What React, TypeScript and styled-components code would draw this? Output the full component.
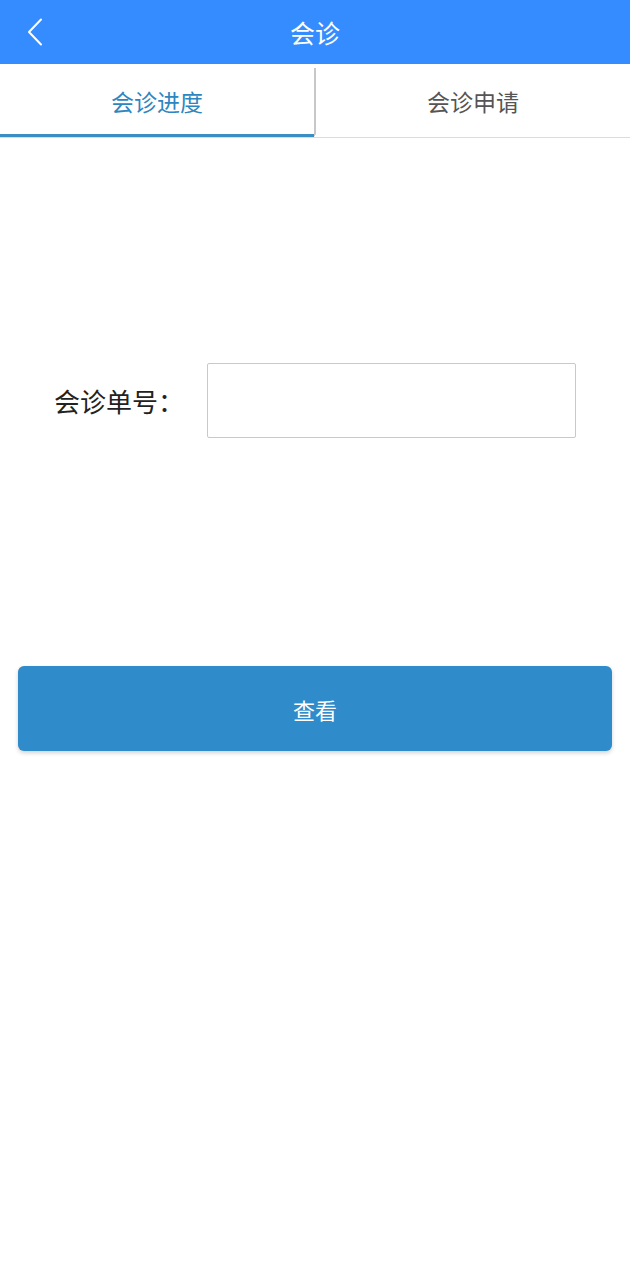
import React, { useState } from 'react';
import styled, { createGlobalStyle } from 'styled-components';

const GlobalStyle = createGlobalStyle`
  html, body {
    margin: 0;
    padding: 0;
    background: #fff;
  }
  body {
    font-family: "Noto Sans CJK SC", "Noto Sans", sans-serif;
  }
`;

const Page = styled.div`
  width: 630px;
  min-height: 1280px;
  display: flex;
  flex-direction: column;
  background: #fff;
`;

const NavBar = styled.header`
  height: 64px;
  background: #358cff;
  display: grid;
  grid-template-columns: 70px 1fr 70px;
  align-items: center;
`;

const BackButton = styled.button`
  width: 70px;
  height: 64px;
  border: 0;
  padding: 0 0 0 26px;
  background: transparent;
  display: flex;
  align-items: center;
`;

const NavTitle = styled.h1`
  margin: 0;
  text-align: center;
  color: #fff;
  font-size: 25px;
  font-weight: 400;
`;

const Tabs = styled.nav`
  display: flex;
  height: 74px;
  border-bottom: 1px solid #dcdcdc;
  box-sizing: border-box;
`;

const Tab = styled.button<{ $active: boolean }>`
  flex: 1;
  border: 0;
  background: #fff;
  font-family: inherit;
  font-size: 23px;
  color: ${({ $active }) => ($active ? '#2e86c1' : '#555')};
  border-bottom: 3px solid ${({ $active }) => ($active ? '#3a8ec4' : 'transparent')};
  padding: 0;
  padding-top: 3px;

  & + & {
    border-left: 2px solid #c8c8c8;
    margin-top: 4px;
    padding-top: 0;
  }
`;

const Form = styled.div`
  padding: 225px 54px 0 54px;
  display: flex;
  align-items: center;
`;

const Label = styled.label`
  font-size: 26px;
  color: #222;
  width: 153px;
  flex-shrink: 0;
`;

const Input = styled.input`
  width: 370px;
  height: 75px;
  box-sizing: border-box;
  border: 1px solid #c9c9c9;
  border-radius: 2px;
  font-size: 22px;
  padding: 0 12px;
  outline: none;
`;

const Actions = styled.div`
  padding: 228px 18px 0 18px;
`;

const PrimaryButton = styled.button`
  width: 100%;
  height: 85px;
  border: 0;
  border-radius: 6px;
  background: #2f8bc9;
  color: #fff;
  font-family: inherit;
  font-size: 22px;
  box-shadow: 0 2px 4px rgba(0, 0, 0, 0.18);
`;

const ChevronLeft = () => (
  <svg width="18" height="28" viewBox="0 0 18 28" fill="none">
    <path d="M15 1.5 L3 14 L15 26.5" stroke="#fff" strokeWidth="2" strokeLinecap="round" strokeLinejoin="round" />
  </svg>
);

export default function App() {
  const [tab, setTab] = useState(0);
  const [orderNo, setOrderNo] = useState('');

  return (
    <Page>
      <GlobalStyle />
      <NavBar>
        <BackButton aria-label="返回">
          <ChevronLeft />
        </BackButton>
        <NavTitle>会诊</NavTitle>
        <span />
      </NavBar>
      <Tabs>
        <Tab $active={tab === 0} onClick={() => setTab(0)}>
          会诊进度
        </Tab>
        <Tab $active={tab === 1} onClick={() => setTab(1)}>
          会诊申请
        </Tab>
      </Tabs>
      <Form>
        <Label htmlFor="orderNo">会诊单号：</Label>
        <Input id="orderNo" value={orderNo} onChange={(e) => setOrderNo(e.target.value)} />
      </Form>
      <Actions>
        <PrimaryButton>查看</PrimaryButton>
      </Actions>
    </Page>
  );
}
